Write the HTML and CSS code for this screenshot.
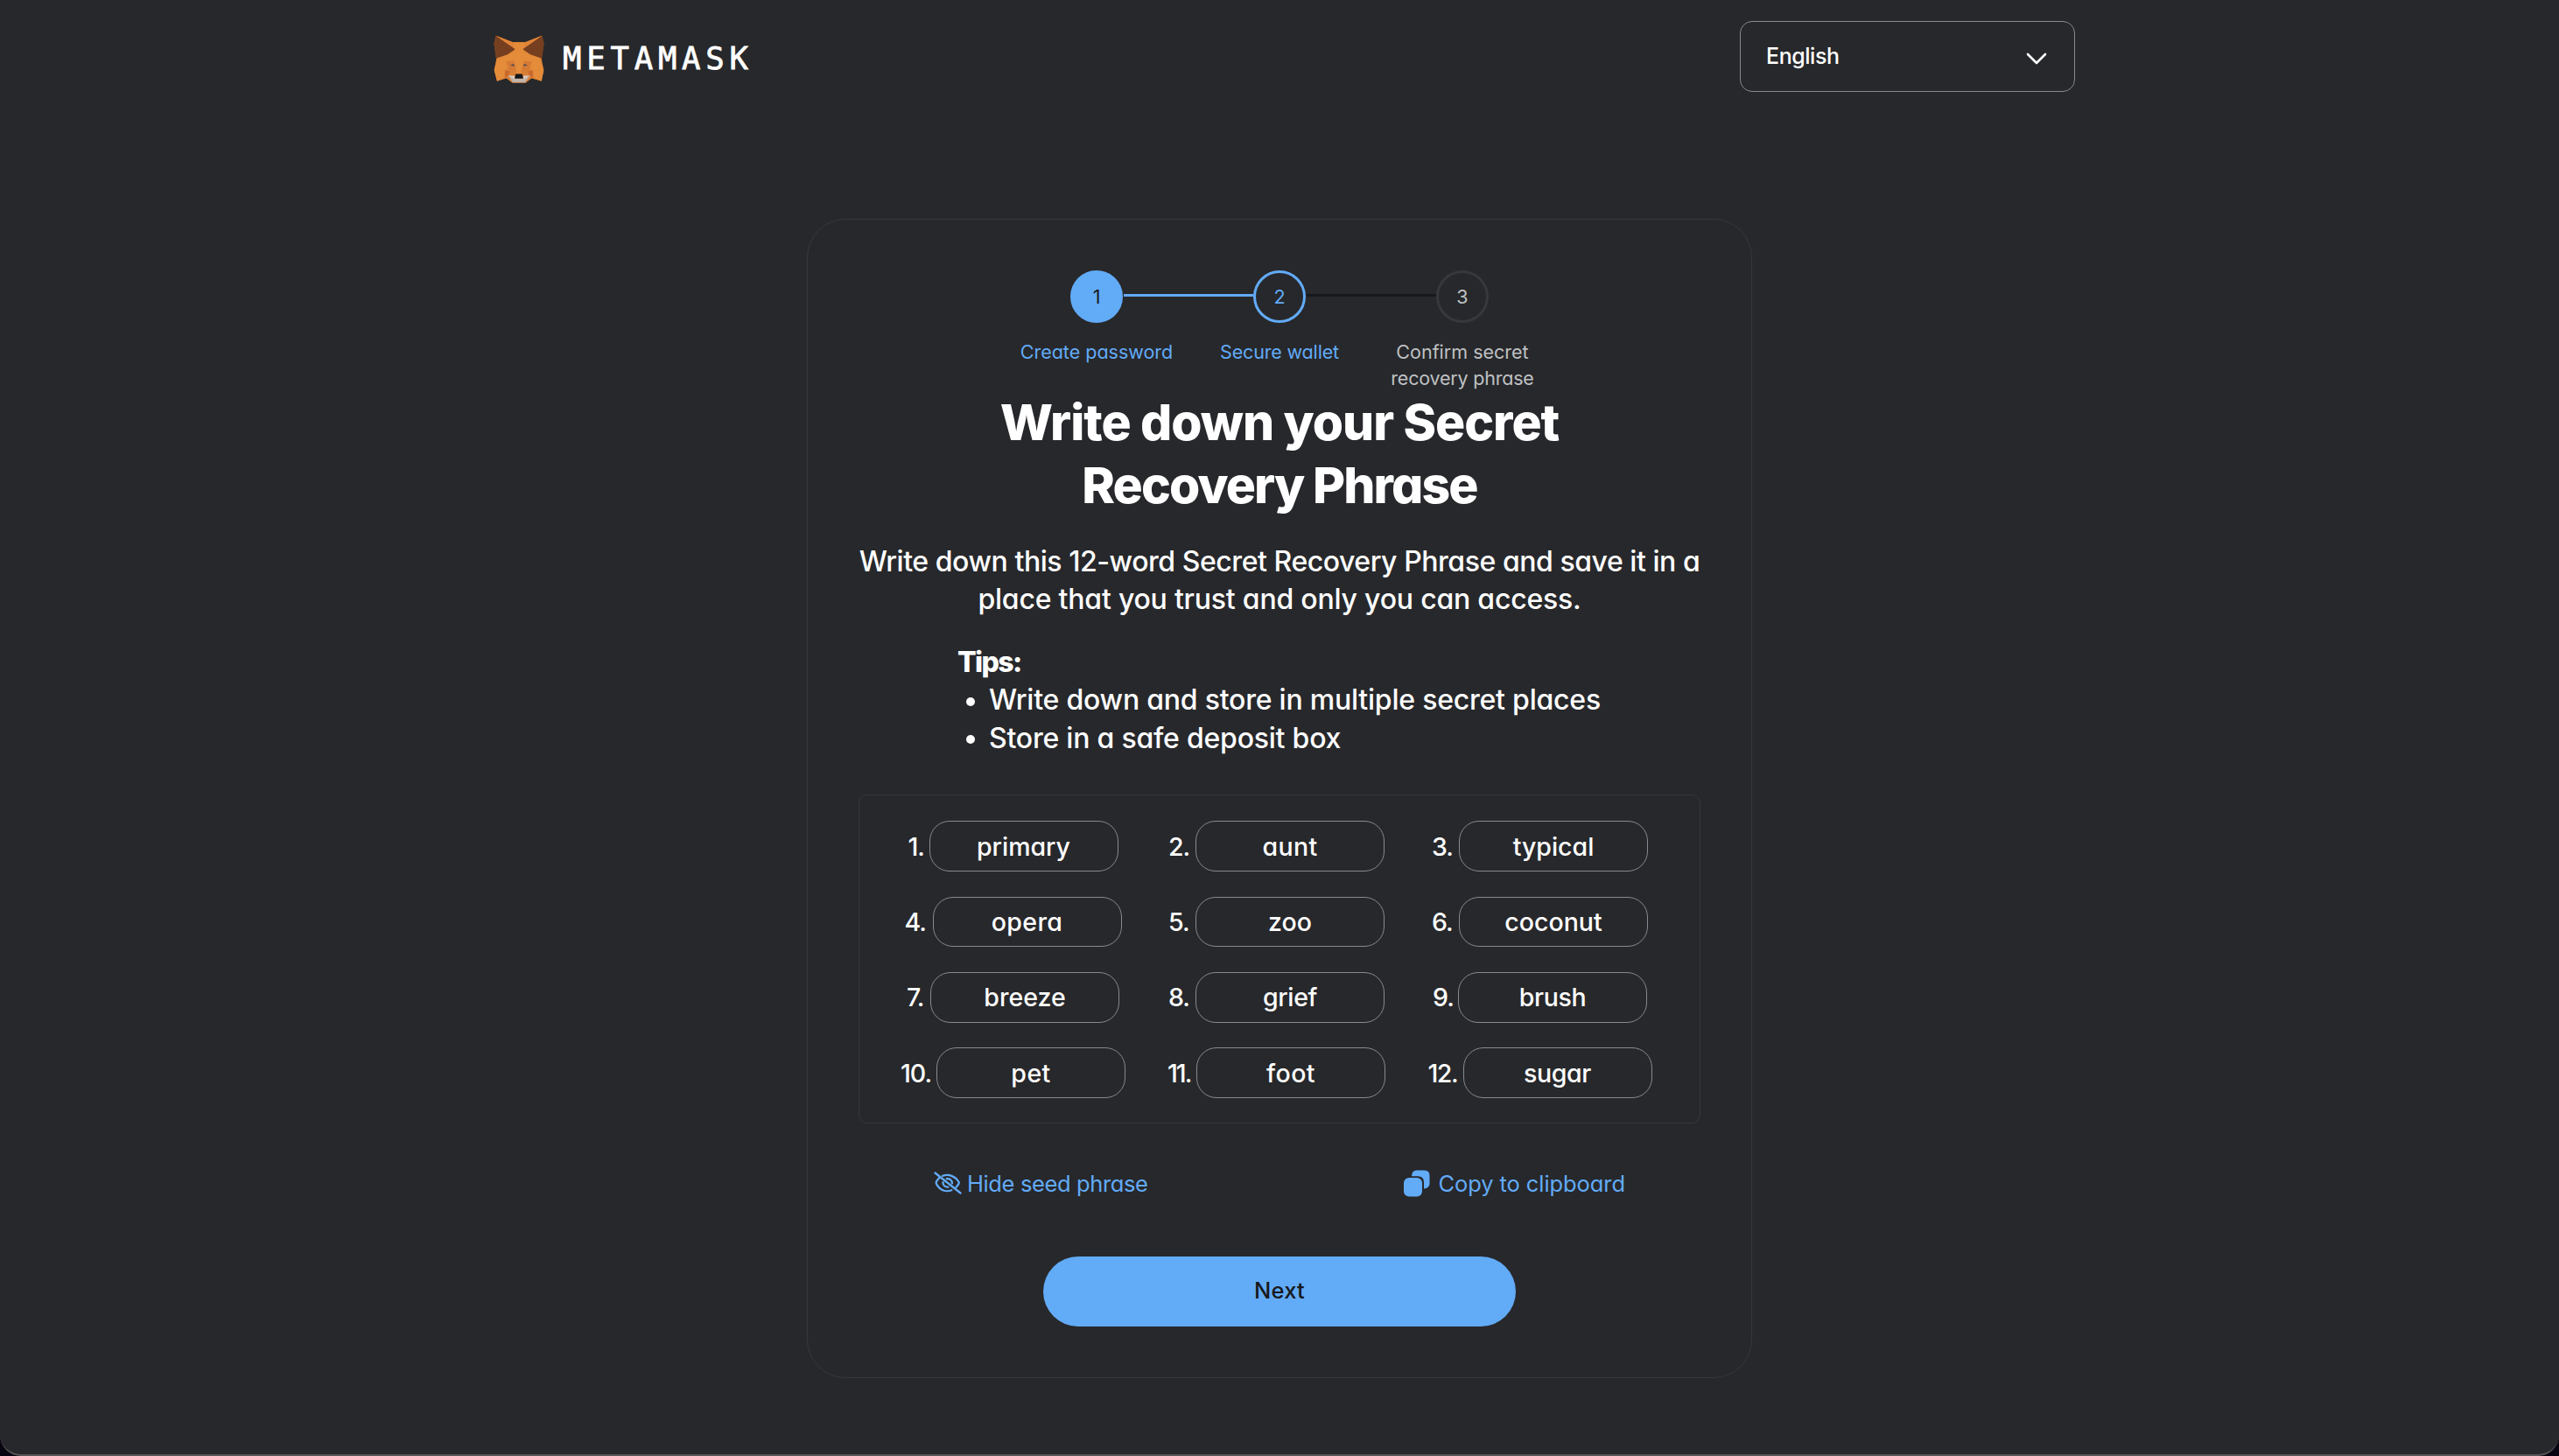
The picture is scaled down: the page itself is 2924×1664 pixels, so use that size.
FILE: index.html
```
<!DOCTYPE html>
<html lang="en">
<head>
<meta charset="utf-8">
<title>MetaMask</title>
<link rel="stylesheet" href="styles.css">
</head>
<body>
<div class="window">
  <header class="header">
    <div class="brand">
      <svg class="fox" viewBox="42 28 174 164">
        <path fill="#d97f35" d="M50 30L108 52H150L208 30L214 60L206 108L214 148L206 186L172 176L152 192H106L86 176L54 186L44 148L52 108L44 60Z"/>
        <path fill="#e48c39" d="M108 52H150L146 84L200 108L214 148H172L156 120L140 160H118L102 120L86 148H44L54 108L112 84Z"/>
        <path fill="#d57a35" d="M84 118L112 116L122 158L112 150L96 148ZM174 118L146 116L136 158L146 150L162 148Z"/>
        <path fill="#c8692e" d="M82 148L98 152L94 166L80 174ZM176 148L160 152L164 166L178 174Z"/>
        <path fill="#e48c39" d="M44 148H80V172L54 186ZM214 148H178V172L206 186Z"/>
        <path fill="#763f20" d="M50 30L116 76L90 94L50 108L43 56ZM208 30L142 76L168 94L208 108L215 56Z"/>
        <path fill="#e08436" d="M50 30L108 52L112 72ZM208 30L150 52L146 72Z"/>
        <path fill="#3d4454" d="M99 130L112 127L113 135ZM159 130L146 127L145 135Z"/>
        <path fill="#c0b3a8" d="M92 166L116 176H142L166 166L150 190H108Z"/>
        <path fill="#dccfc5" d="M92 166L114 168L116 180ZM166 166L144 168L142 180Z"/>
        <path fill="#16181b" d="M118 161H140L144 177H114Z"/>
      </svg>
      <span class="wordmark">METAMASK</span>
    </div>
    <div class="select">
      <span class="t-english">English</span>
      <svg class="chevron" viewBox="0 0 24 14"><path d="M2 2L12 12L22 2"/></svg>
    </div>
  </header>

  <main class="card">
    <ol class="steps">
      <li class="step done"><span class="dot">1</span><span class="label">Create password</span></li>
      <li class="step current"><span class="dot">2</span><span class="label t-secure">Secure wallet</span></li>
      <li class="step"><span class="dot">3</span><span class="label">Confirm secret<br><span class="t-recovery">recovery phrase</span></span></li>
    </ol>
    <h1 class="title"><span class="title-top">Write down your Secret</span><br><span class="title-bottom">Recovery Phrase</span></h1>
    <p class="intro"><span class="intro-top">Write down this 12-word Secret Recovery Phrase and save it in a</span><br><span class="intro-bottom">place that you trust and only you can access.</span></p>
    <section class="tips">
      <strong>Tips:</strong>
      <ul>
        <li>Write down and store in multiple secret places</li>
        <li>Store in a safe deposit box</li>
      </ul>
    </section>
    <div class="phrase">
      <div class="cell"><span class="num n1">1.</span><span class="chip">primary</span></div>
      <div class="cell"><span class="num">2.</span><span class="chip wide">aunt</span></div>
      <div class="cell"><span class="num">3.</span><span class="chip">typical</span></div>
      <div class="cell"><span class="num n4">4.</span><span class="chip wide">opera</span></div>
      <div class="cell"><span class="num">5.</span><span class="chip">zoo</span></div>
      <div class="cell"><span class="num">6.</span><span class="chip">coconut</span></div>
      <div class="cell"><span class="num n7">7.</span><span class="chip">breeze</span></div>
      <div class="cell"><span class="num">8.</span><span class="chip tight">grief</span></div>
      <div class="cell"><span class="num n9">9.</span><span class="chip tight">brush</span></div>
      <div class="cell"><span class="num n10">10.</span><span class="chip wide">pet</span></div>
      <div class="cell"><span class="num n11">11.</span><span class="chip wide">foot</span></div>
      <div class="cell"><span class="num n12">12.</span><span class="chip tight">sugar</span></div>
    </div>
    <div class="links">
      <a class="link">
        <svg class="eye" viewBox="0 0 32 26"><path d="M1.5 1.5L30.5 24.5M10 4.800C18 2.200 25 6 28.300 11.500Q29.300 13 28 14.800L25.500 17.800M6.200 7.300L3.400 10.600Q2 12.700 3.400 14.800C7.500 21.500 14 23.600 20.300 21.200M14.800 8.200C18.200 7.600 21 10 20.900 13.400M10.600 12.200C10.200 15.400 13 18 16.400 17.600"/></svg>
        <span class="t-hide">Hide seed phrase</span>
      </a>
      <a class="link">
        <svg class="copy" viewBox="0 0 30 31"><rect x="0" y="9" width="21" height="21.5" rx="6"/><path d="M9 7.2C9.3 2.5 11.5 .5 15 .5H23.5Q29.5 .5 29.5 6.5V15C29.5 19 27.500 21.200 23 21.400V14Q23 7.200 16 7.200Z"/></svg>
        <span class="t-copy">Copy to clipboard</span>
      </a>
    </div>
    <button class="next">Next</button>
  </main>
</div>
</body>
</html>
```
FILE: styles.css
```
* {
  box-sizing: border-box;
}

body {
  margin: 0;
  background: #080512;
  color: #fff;
  font-family: Inter, "Open Sans", sans-serif;
  font-feature-settings: "cv11";
}

.window {
  height: 1664px;
  background: #27282b;
  border-bottom: 2px solid #5a5658;
  border-radius: 0 0 24px 24px;
}

/* Header */
.header {
  width: 1807px;
  height: 250px;
  margin-left: 564px;
  padding-top: 24px;
  display: flex;
  justify-content: space-between;
  align-items: flex-start;
}

.brand {
  display: flex;
  align-items: center;
  height: 86px;
}

.fox {
  display: block;
  width: 58px;
  height: 55px;
}

.wordmark {
  margin-left: 21px;
  font: 35.6px/40px "DejaVu Sans Mono", monospace;
  letter-spacing: 5.8px;
  -webkit-text-stroke: 0.8px #fff;
}

.select {
  width: 383px;
  height: 81px;
  border: 1px solid #858b93;
  border-radius: 14px;
  padding: 0 31px 0 29px;
  display: flex;
  align-items: center;
  justify-content: space-between;
  font-size: 25px;
  font-weight: 500;
}

.t-english {
  letter-spacing: -0.45px;
  padding-bottom: 1px;
}

.chevron {
  width: 24px;
  height: 14px;
  margin-top: 4px;
  fill: none;
  stroke: #fff;
  stroke-width: 2.6;
  stroke-linecap: round;
  stroke-linejoin: round;
}

/* Card */
.card {
  width: 1080px;
  height: 1325px;
  margin: 0 auto;
  border: 1px solid #36383c;
  border-radius: 44px;
  padding-top: 58px;
  display: flex;
  flex-direction: column;
  align-items: center;
}

/* Progress steps */
.steps {
  list-style: none;
  margin: 0;
  padding: 0;
  display: grid;
  grid-template-columns: repeat(3, 209px);
  height: 138px;
  font-size: 21.5px;
  line-height: 30px;
  color: #bfc1c4;
}

.step {
  position: relative;
  display: flex;
  flex-direction: column;
  align-items: center;
  text-align: center;
  gap: 18px;
}

.dot {
  width: 60px;
  height: 60px;
  border: 3px solid #36383c;
  border-radius: 50%;
  display: flex;
  align-items: center;
  justify-content: center;
}

.done,
.current {
  color: #62abf7;
}

.done .dot {
  background: #62abf7;
  border-color: #62abf7;
  color: #17191c;
}

.current .dot {
  border-color: #62abf7;
}

.done::after,
.current::after {
  content: "";
  position: absolute;
  left: 135px;
  top: 27px;
  width: 148px;
  height: 3px;
  background: #62abf7;
}

.current::after {
  background: #17191c;
}

.label {
  white-space: nowrap;
}

.t-secure {
  letter-spacing: -0.16px;
}

.t-recovery {
  letter-spacing: -0.21px;
}

/* Copy */
.title {
  margin: 0;
  text-align: center;
  font-size: 57px;
  line-height: 72px;
  font-weight: 800;
}

.title-top {
  letter-spacing: -1.05px;
}

.title-bottom {
  letter-spacing: -1.87px;
}

.intro {
  margin: 29px 0 28px;
  text-align: center;
  font-size: 32px;
  line-height: 43.4px;
  font-weight: 500;
  white-space: nowrap;
}

.intro-top {
  letter-spacing: -0.45px;
}

.intro-bottom {
  letter-spacing: -0.21px;
}

.tips {
  width: 736px;
  font-size: 32px;
  line-height: 43.5px;
  font-weight: 500;
  letter-spacing: -0.22px;
  white-space: nowrap;
}

.tips strong {
  display: block;
  font-weight: 800;
  letter-spacing: -1.62px;
}

.tips ul {
  list-style: none;
  margin: 0;
  padding: 0;
}

.tips li {
  display: flex;
  align-items: center;
}

.tips li::before {
  content: "";
  flex: none;
  width: 10px;
  height: 10px;
  border-radius: 50%;
  background: #fff;
  margin: 3px 16px 0 10px;
}

/* Recovery phrase */
.phrase {
  width: 962px;
  height: 376px;
  margin-top: 43px;
  border: 1px solid #36383c;
  border-radius: 10px;
  padding: 29px 0 0 25px;
  display: grid;
  grid-template-columns: repeat(3, 301px);
  grid-auto-rows: 57.6px;
  row-gap: 28.8px;
  font-size: 28.5px;
  font-weight: 500;
}

.cell {
  display: flex;
  justify-content: center;
  align-items: center;
}

.num {
  width: 31px;
  white-space: nowrap;
  letter-spacing: -1px;
}

.n1 { width: 24px; }
.n4 { width: 32px; }
.n7 { width: 27px; }
.n9 { width: 29px; }
.n10 { width: 41px; }
.n11 { width: 33px; letter-spacing: -2px; }
.n12 { width: 40px; letter-spacing: -1.5px; }

.chip {
  width: 216px;
  height: 57.6px;
  border: 1px solid #858b93;
  border-radius: 23px;
  display: flex;
  align-items: center;
  justify-content: center;
}

.wide {
  letter-spacing: 0.4px;
}

.tight {
  letter-spacing: -0.4px;
}

/* Actions */
.links {
  width: 790px;
  height: 30px;
  margin-top: 53px;
  display: flex;
  justify-content: space-between;
  font-size: 25.5px;
  color: #62abf7;
}

.link {
  display: flex;
  align-items: center;
}

.eye {
  width: 32px;
  height: 26px;
  margin-right: 6px;
  fill: none;
  stroke: #62abf7;
  stroke-width: 2.3;
  stroke-linecap: round;
  stroke-linejoin: round;
}

.copy {
  width: 30px;
  height: 31px;
  margin-right: 9px;
  fill: #62abf7;
}

.t-hide {
  letter-spacing: -0.38px;
}

.t-copy {
  letter-spacing: -0.08px;
}

.next {
  width: 540px;
  height: 80px;
  margin-top: 69px;
  border: 0;
  border-radius: 40px;
  padding: 0 0 3px;
  background: #62abf7;
  color: #17191c;
  font: 500 25.5px Inter, sans-serif;
  letter-spacing: 0.2px;
}
```
